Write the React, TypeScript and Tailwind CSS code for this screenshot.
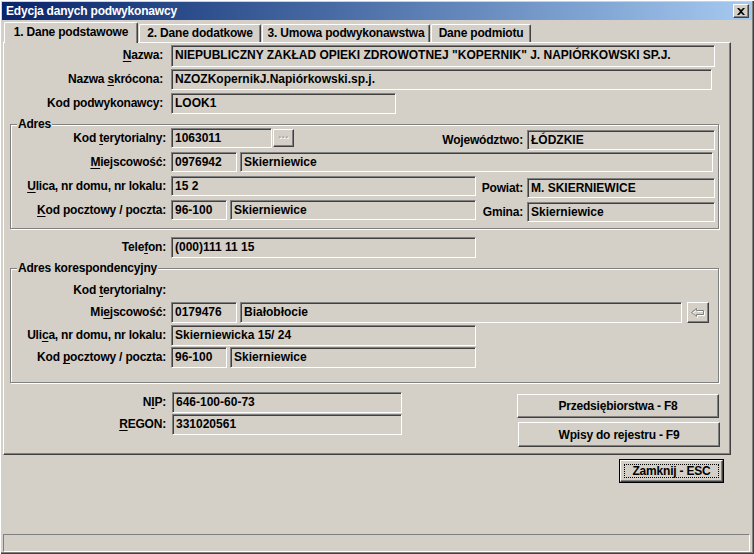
import React from "react";

type P = { className?: string; children?: React.ReactNode };

function Box({ className = "", children }: P) {
  return (
    <div
      className={`flex items-start shrink-0 overflow-hidden whitespace-nowrap border border-t-[#808080] border-l-[#808080] border-r-white border-b-white shadow-[inset_1px_1px_0_#404040] pl-[3px] pt-[1px] leading-[16px] tracking-normal ${className}`}
    >
      {children}
    </div>
  );
}

function Label({ className = "", children }: P) {
  return (
    <div className={`flex items-start justify-end shrink-0 whitespace-nowrap pt-[2px] leading-[16px] ${className}`}>
      {children}
    </div>
  );
}

function U({ children }: P) {
  return <span className="underline underline-offset-[2px]">{children}</span>;
}

function Raised({ className = "", children }: P) {
  return (
    <div
      className={`flex items-center justify-center shrink-0 whitespace-nowrap bg-[#d4d0c8] border border-t-white border-l-white border-r-[#404040] border-b-[#404040] shadow-[inset_-1px_-1px_0_#808080] leading-[16px] ${className}`}
    >
      {children}
    </div>
  );
}

function Group({ title, className = "", children }: P & { title: string }) {
  return (
    <div
      className={`relative shrink-0 flex flex-col border border-[#808080] shadow-[inset_1px_1px_0_#ffffff,1px_1px_0_#ffffff] ${className}`}
    >
      <span className="absolute left-[6px] top-[-9px] bg-[#d4d0c8] px-px leading-[16px] whitespace-nowrap">
        {title}
      </span>
      {children}
    </div>
  );
}

function ArrowIcon() {
  return (
    <svg width="16" height="10" viewBox="0 0 16 10">
      <path d="M2.5 5.5 L7.5 1.5 L7.5 3.5 L14.5 3.5 L14.5 7.5 L7.5 7.5 L7.5 9.5 Z" fill="none" stroke="#ffffff" strokeWidth="1" />
      <path d="M1.5 4.5 L6.5 0.5 L6.5 2.5 L13.5 2.5 L13.5 6.5 L6.5 6.5 L6.5 8.5 Z" fill="none" stroke="#808080" strokeWidth="1" />
    </svg>
  );
}

export default function App() {
  return (
    <div className="w-[754px] h-[554px] bg-[#d4d0c8] p-[2px] shadow-[inset_1px_1px_0_#ffffff,inset_-1px_-1px_0_#404040,inset_-2px_-2px_0_#808080] [font-family:'Liberation_Sans',Arial,sans-serif] font-bold text-[12px] tracking-[-0.2px] text-black overflow-hidden flex flex-col">
      {/* Title bar */}
      <div className="h-[18px] w-[750px] shrink-0 bg-linear-to-r from-[#0a246a] to-[#a6caf0] flex items-center justify-between pl-[4px] pr-[3px]">
        <span className="text-white leading-[16px] whitespace-nowrap">Edycja danych podwykonawcy</span>
        <div className="w-[16px] h-[14px] bg-[#d4d0c8] border border-t-white border-l-white border-r-[#404040] border-b-[#404040] shadow-[inset_-1px_-1px_0_#808080] flex items-center justify-center">
          <svg width="8" height="7" viewBox="0 0 8 7">
            <path d="M0 0 L2 0 L4 2 L6 0 L8 0 L5 3.5 L8 7 L6 7 L4 5 L2 7 L0 7 L3 3.5 Z" fill="#000" />
          </svg>
        </div>
      </div>

      {/* Tabs */}
      <div className="flex items-end h-[22px] pl-[2px] shrink-0">
        <div className="relative z-10 h-[21px] mb-[-1px] w-[134px] bg-[#d4d0c8] border-t border-l border-r border-t-white border-l-white border-r-[#404040] shadow-[inset_-1px_0_0_#808080] rounded-t-[2px] flex items-start justify-center pt-[1px] leading-[16px] whitespace-nowrap">
          1. Dane podstawowe
        </div>
        <div className="h-[18px] w-[122px] ml-[1px] border-t border-l border-r border-t-white border-l-white border-r-[#404040] shadow-[inset_-1px_0_0_#808080] rounded-t-[2px] flex items-start justify-center leading-[16px] whitespace-nowrap">
          2. Dane dodatkowe
        </div>
        <div className="h-[18px] w-[168px] ml-[1px] border-t border-l border-r border-t-white border-l-white border-r-[#404040] shadow-[inset_-1px_0_0_#808080] rounded-t-[2px] flex items-start justify-center leading-[16px] whitespace-nowrap">
          3. Umowa podwykonawstwa
        </div>
        <div className="h-[18px] w-[100px] ml-px border-t border-l border-r border-t-white border-l-white border-r-[#404040] shadow-[inset_-1px_0_0_#808080] rounded-t-[2px] flex items-start justify-center leading-[16px] whitespace-nowrap">
          Dane podmiotu
        </div>
      </div>

      {/* Panel */}
      <div className="ml-px w-[728px] h-[413px] shrink-0 border border-t-white border-l-white border-r-[#404040] border-b-[#404040] shadow-[inset_-1px_-1px_0_#808080] flex flex-col">
        {/* Nazwa */}
        <div className="flex mt-[2px] h-[22px]">
          <Label className="w-[159px] h-[22px]">
            <span><U>N</U>azwa:</span>
          </Label>
          <Box className="ml-[8px] w-[544px] h-[22px]">
            NIEPUBLICZNY ZAKŁAD OPIEKI ZDROWOTNEJ "KOPERNIK" J. NAPIÓRKOWSKI SP.J.
          </Box>
        </div>
        <div className="flex mt-[2px] h-[21px]">
          <Label className="w-[159px] h-[21px]">
            <span>Nazwa <U>s</U>krócona:</span>
          </Label>
          <Box className="ml-[8px] w-[541px] h-[21px]">NZOZKopernikJ.Napiórkowski.sp.j.</Box>
        </div>
        <div className="flex mt-[3px] h-[21px]">
          <Label className="w-[159px] h-[21px]">Kod podwykonawcy:</Label>
          <Box className="ml-[8px] w-[225px] h-[21px]">LOOK1</Box>
        </div>

        {/* Adres */}
        <Group title="Adres" className="ml-[6px] mt-[10px] w-[709px] h-[105px]">
          <div className="flex items-start mt-[3px] h-[22px]">
            <Label className="w-[155px] h-[20px]">
              <span>Kod <U>t</U>erytorialny:</span>
            </Label>
            <Box className="ml-[5px] w-[101px] h-[20px]">1063011</Box>
            <Raised className="ml-px mt-px w-[21px] h-[18px] text-[#a0a0a0] [text-shadow:1px_1px_0_#ffffff] text-[11px]">
              <span className="-mt-[3px]">···</span>
            </Raised>
            <Label className="w-[229px] h-[20px] mt-[2px]">Województwo:</Label>
            <Box className="ml-[4px] mt-[2px] w-[188px] h-[20px]">ŁÓDZKIE</Box>
          </div>
          <div className="flex items-start mt-[2px] h-[20px]">
            <Label className="w-[155px] h-[20px]">
              <span><U>M</U>iejscowość:</span>
            </Label>
            <Box className="ml-[5px] w-[66px] h-[20px]">0976942</Box>
            <Box className="ml-[3px] w-[473px] h-[20px]">Skierniewice</Box>
          </div>
          <div className="flex items-start mt-[4px] h-[22px]">
            <Label className="w-[155px] h-[20px]">
              <span><U>U</U>lica, nr domu, nr lokalu:</span>
            </Label>
            <Box className="ml-[5px] w-[305px] h-[20px]">15 2</Box>
            <Label className="w-[47px] h-[20px] mt-[2px]">Powiat:</Label>
            <Box className="ml-[4px] mt-[2px] w-[188px] h-[20px]">M. SKIERNIEWICE</Box>
          </div>
          <div className="flex items-start mt-[2px] h-[22px]">
            <Label className="w-[155px] h-[20px]">
              <span><U>K</U>od pocztowy / poczta:</span>
            </Label>
            <Box className="ml-[5px] w-[56px] h-[20px]">96-100</Box>
            <Box className="ml-[3px] w-[246px] h-[20px]">Skierniewice</Box>
            <Label className="w-[47px] h-[20px] mt-[2px]">Gmina:</Label>
            <Box className="ml-[4px] mt-[2px] w-[188px] h-[20px]">Skierniewice</Box>
          </div>
        </Group>

        {/* Telefon */}
        <div className="flex mt-[8px] h-[21px]">
          <Label className="w-[162px] h-[21px]">
            <span>Tele<U>f</U>on:</span>
          </Label>
          <Box className="ml-[5px] w-[305px] h-[21px]">(000)111 11 15</Box>
        </div>

        {/* Adres korespondencyjny */}
        <Group title="Adres korespondencyjny" className="ml-[6px] mt-[10px] w-[709px] h-[115px]">
          <div className="flex items-start mt-[11px] h-[20px]">
            <Label className="w-[155px] h-[20px]">
              <span>Kod <U>t</U>erytorialny:</span>
            </Label>
          </div>
          <div className="flex items-start mt-[2px] h-[21px]">
            <Label className="w-[155px] h-[21px]">
              <span>Mi<U>e</U>jscowość:</span>
            </Label>
            <Box className="ml-[5px] w-[66px] h-[21px]">0179476</Box>
            <Box className="ml-[3px] w-[442px] h-[21px]">Białobłocie</Box>
            <Raised className="ml-[5px] w-[22px] h-[21px]">
              <ArrowIcon />
            </Raised>
          </div>
          <div className="flex items-start mt-[2px] h-[21px]">
            <Label className="w-[155px] h-[21px]">
              <span>Uli<U>c</U>a, nr domu, nr lokalu:</span>
            </Label>
            <Box className="ml-[5px] w-[305px] h-[21px]">Skierniewicka 15/ 24</Box>
          </div>
          <div className="flex items-start mt-px h-[21px]">
            <Label className="w-[155px] h-[21px]">
              <span>Kod <U>p</U>ocztowy / poczta:</span>
            </Label>
            <Box className="ml-[5px] w-[56px] h-[21px]">96-100</Box>
            <Box className="ml-[3px] w-[246px] h-[21px]">Skierniewice</Box>
          </div>
        </Group>

        {/* NIP / REGON + buttons */}
        <div className="flex items-start mt-[9px]">
          <div className="flex flex-col">
            <div className="flex h-[21px]">
              <Label className="w-[162px] h-[21px]">
                <span>N<U>I</U>P:</span>
              </Label>
              <Box className="ml-[6px] w-[230px] h-[21px]">646-100-60-73</Box>
            </div>
            <div className="flex h-[21px] mt-px">
              <Label className="w-[162px] h-[21px]">
                <span><U>R</U>EGON:</span>
              </Label>
              <Box className="ml-[6px] w-[230px] h-[21px]">331020561</Box>
            </div>
          </div>
          <div className="flex flex-col ml-[115px] mt-[2px]">
            <Raised className="w-[202px] h-[24px]">Przedsiębiorstwa - F8</Raised>
            <Raised className="ml-px mt-[4px] w-[202px] h-[25px]">Wpisy do rejestru - F9</Raised>
          </div>
        </div>
      </div>

      {/* Zamknij */}
      <div className="flex mt-[4px] h-[24px] shrink-0">
        <div className="ml-[617px] w-[105px] h-[24px] border border-black">
          <Raised className="w-full h-full p-[3px]">
            <span className="w-full h-full flex items-center justify-center border border-dotted border-black leading-[14px]">Zamknij - ESC</span>
          </Raised>
        </div>
      </div>

      {/* Status bar */}
      <div className="ml-px mt-[51px] w-[747px] h-[18px] shrink-0 border border-t-[#808080] border-l-[#808080] border-r-white border-b-white"></div>
    </div>
  );
}
